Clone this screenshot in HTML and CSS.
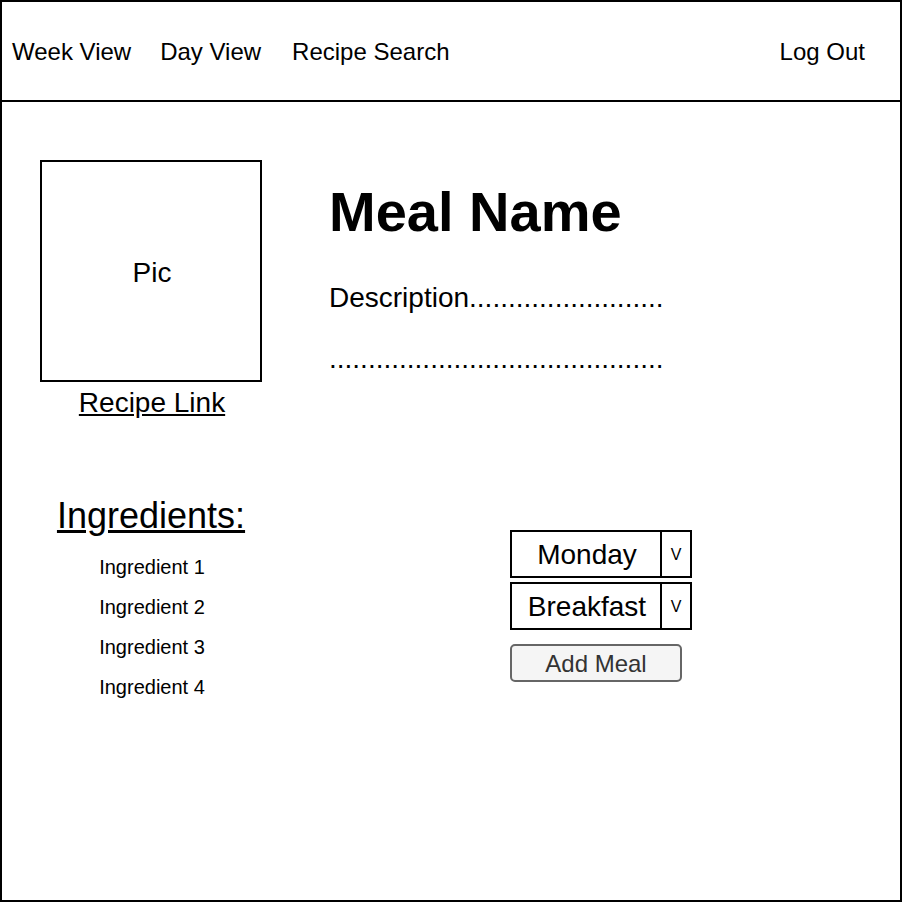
FILE: index.html
```html
<!DOCTYPE html>
<html lang="en">
<head>
  <meta charset="UTF-8">
  <meta name="viewport" content="width=device-width, initial-scale=1.0">
  <title>Meal Detail</title>
  <link rel="stylesheet" href="styles.css">
</head>
<body>
  <div class="frame">
    <header class="topbar">
      <a href="#" class="nav_link">Week View</a>
      <a href="#" class="nav_link">Day View</a>
      <a href="#" class="nav_link search">Recipe Search</a>
      <a href="#" class="nav_link logout">Log Out</a>
    </header>

    <main class="content">
      <section class="top_row">
        <div class="pic_col">
          <div class="pic_box">Pic</div>
          <a href="#" class="recipe_link">Recipe Link</a>
        </div>
        <div class="meal_info">
          <h1 class="meal_name">Meal Name</h1>
          <p class="desc">Description.........................</p>
          <p class="desc desc02">...........................................</p>
        </div>
      </section>

      <section class="bottom_row">
        <div class="ingredients">
          <h2 class="ing_title">Ingredients:</h2>
          <ul class="ing_list">
            <li>Ingredient 1</li>
            <li>Ingredient 2</li>
            <li>Ingredient 3</li>
            <li>Ingredient 4</li>
          </ul>
        </div>
        <form class="meal_form">
          <div class="select">
            <span class="select_value">Monday</span>
            <span class="select_arrow">V</span>
          </div>
          <div class="select">
            <span class="select_value">Breakfast</span>
            <span class="select_arrow">V</span>
          </div>
          <button type="button" class="add_btn">Add Meal</button>
        </form>
      </section>
    </main>
  </div>
</body>
</html>
```

FILE: styles.css
```css
body{
  margin: 0;
  font-family: "Liberation Sans", Arial, sans-serif;
  color: #000;
  background-color: #fff;
}
.frame{
  width: 902px;height: 902px;
  border: 2px solid #000;
  box-sizing: border-box;
}

/* 상단 메뉴 */
.topbar{
  height: 100px;
  border-bottom: 2px solid #000;
  box-sizing: border-box;
  display: flex;
  align-items: center;
  gap: 29px;
  padding: 2px 35px 0 10px;
}
.nav_link{
  color: #000;
  text-decoration: none;
  font-size: 24px;
}
.search{margin-left: 2px;}
.logout{margin-left: auto;}

/* 본문 */
.content{
  padding: 58px 0 0 38px;
}
.top_row{
  display: flex;
}
.pic_col{
  width: 222px;
  display: flex;
  flex-direction: column;
  align-items: center;
}
.pic_box{
  width: 222px;height: 222px;
  border: 2px solid #000;
  box-sizing: border-box;
  display: flex;
  align-items: center;
  justify-content: center;
  padding: 3px 0 0 2px;
  font-size: 28px;
}
.recipe_link{
  margin: 5px 0 0 2px;
  font-size: 28px;
  line-height: 32px;
  color: #000;
}
.meal_info{
  margin-left: 67px;
  padding-top: 20px;
}
.meal_name{
  margin: 0;
  font-size: 56px;
  line-height: 64px;
  font-weight: bold;
}
.desc{
  margin: 38px 0 0;
  font-size: 28px;
  line-height: 32px;
}
.desc02{margin-top: 29px;}

.bottom_row{
  display: flex;
  margin-top: 77px;
}
.ingredients{
  width: 222px;
  padding-left: 2px;
  box-sizing: border-box;
  text-align: center;
}
.ing_title{
  margin: 0 0 0 -2px;
  font-size: 36px;
  line-height: 40px;
  font-weight: normal;
  text-decoration: underline;
}
.ing_list{
  list-style: none;
  margin: 11px 0 0;padding: 0;
}
.ing_list li{
  font-size: 20px;
  line-height: 40px;
}

/* 식단 추가 */
.meal_form{
  margin: 34px 0 0 248px;
  display: flex;
  flex-direction: column;
  gap: 4px;
}
.select{
  width: 182px;height: 48px;
  border: 2px solid #000;
  box-sizing: border-box;
  display: flex;
}
.select_value{
  flex: 1;
  display: flex;
  align-items: center;
  justify-content: center;
  padding: 2px 0 0 2px;
  font-size: 28px;
}
.select_arrow{
  width: 30px;
  border-left: 2px solid #000;
  box-sizing: border-box;
  display: flex;
  align-items: center;
  justify-content: center;
  padding-top: 2px;
  font-size: 16px;
}
.add_btn{
  margin-top: 10px;
  width: 172px;height: 38px;
  border: 2px solid #666;
  border-radius: 5px;
  background-color: #f5f5f5;
  color: #333;
  font-family: inherit;
  font-size: 24px;
  padding: 2px 0 0;
}
```
